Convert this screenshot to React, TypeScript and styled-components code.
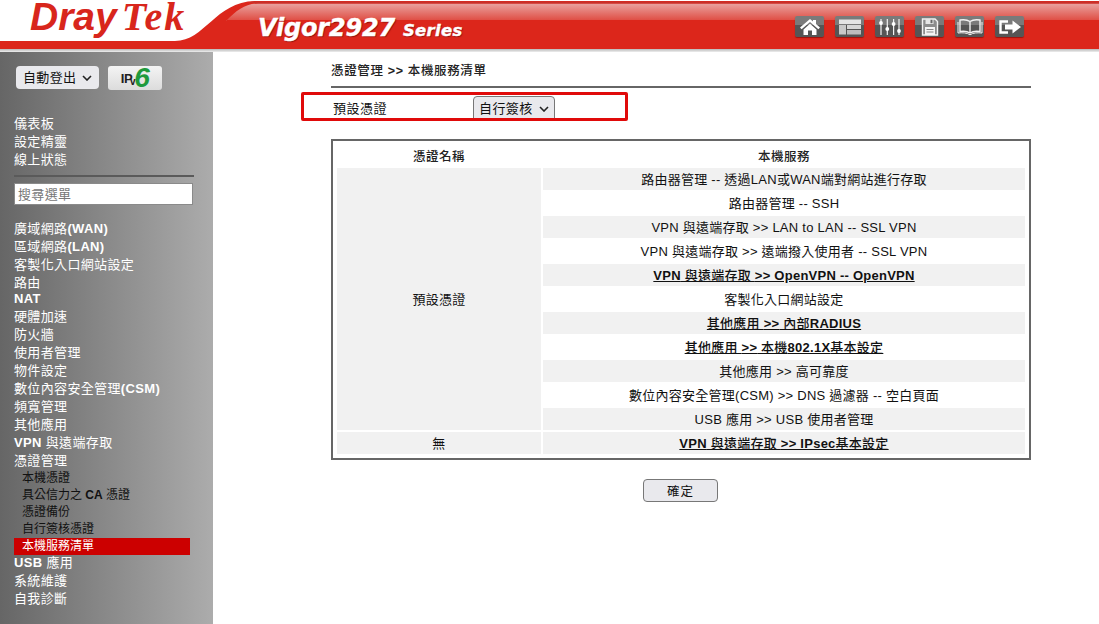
import React from "react";
import styled, { createGlobalStyle } from "styled-components";

const FONT = `"Liberation Sans", "Noto Sans CJK TC", sans-serif`;

const chevron =
  "url(\"data:image/svg+xml,%3Csvg xmlns='http://www.w3.org/2000/svg' width='10' height='6' viewBox='0 0 10 6'%3E%3Cpath d='M1 1l4 4 4-4' fill='none' stroke='%23222' stroke-width='1.600'/%3E%3C/svg%3E\")";

const Global = createGlobalStyle`
  html, body { margin: 0; padding: 0; background: #fff; height: 100%; overflow: hidden; }
  body { font-family: ${FONT}; font-size: 13px; color: #111; }
`;

const Page = styled.div`
  width: 1099px;
  height: 624px;
  display: flex;
  flex-direction: column;
`;

const Header = styled.header`
  position: relative;
  flex: 0 0 52px;
  display: flex;
  align-items: flex-start;
`;

const Swoosh = styled.svg`
  position: absolute;
  inset: 0;
  width: 1099px;
  height: 52px;
`;

const Logo = styled.div`
  position: relative;
  margin: 0 0 0 30px;
  width: 228px;
  height: 40px;
  display: flex;
  align-items: flex-start;
  white-space: nowrap;
  color: #d8261c;
`;

const LogoDray = styled.span`
  display: block;
  height: 40px;
  line-height: 33px;
  font-family: "Liberation Sans", sans-serif;
  font-weight: 700;
  font-style: italic;
  font-size: 39px;
`;

const LogoTek = styled.span`
  display: block;
  height: 40px;
  line-height: 33px;
  font-family: "Liberation Serif", serif;
  font-weight: 700;
  font-style: italic;
  font-size: 40px;
  margin-left: 5px;
  letter-spacing: 2px;
`;

const Model = styled.div`
  position: relative;
  margin-top: 13px;
  width: 537px;
  color: #fff;
  white-space: nowrap;
  font-family: "DejaVu Sans", sans-serif;
  font-weight: 700;
  font-style: italic;
  font-size: 24px;
  letter-spacing: -0.2px;
  line-height: 30px;
  -webkit-text-stroke: 0.4px #fff;
  text-shadow: 1px 1px 1px rgba(90, 0, 0, 0.6);
`;

const ModelSeries = styled.span`
  font-size: 16.5px;
  margin-left: 8px;
  letter-spacing: 0.3px;
`;

const Tools = styled.nav`
  position: relative;
  display: flex;
  gap: 11px;
  margin-top: 16px;
`;

const Tool = styled.div`
  width: 29px;
  height: 21px;
  border-radius: 2px;
  background: linear-gradient(#7a7a7a 0 45%, #555 45% 100%);
  box-shadow: 0 1px 1px rgba(90, 0, 0, 0.5);
  display: flex;
  align-items: center;
  justify-content: center;
`;

const Body = styled.div`
  flex: 1;
  display: flex;
  min-height: 0;
`;

const Sidebar = styled.aside`
  flex: 0 0 213px;
  box-sizing: border-box;
  padding: 14px 0 0 14px;
  background: linear-gradient(90deg, #666 0%, #acacac 100%);
  color: #fff;
  letter-spacing: 0.35px;
`;

const TopControls = styled.div`
  display: flex;
  align-items: flex-start;
  gap: 9px;
  margin-left: 2px;
  margin-bottom: 25px;
`;

const AutoSelect = styled.select`
  appearance: none;
  width: 83px;
  height: 23px;
  padding: 0 0 0 7px;
  border: 0;
  border-radius: 4px;
  background: #e9e9ed ${chevron} no-repeat right 7px center;
  color: #111;
  font-family: ${FONT};
  font-size: 13px;
  letter-spacing: 0.35px;
`;

const Ipv6 = styled.div`
  width: 54px;
  height: 24px;
  border-radius: 3px;
  background: linear-gradient(#f4f4f4, #dcdcdc);
  display: flex;
  align-items: center;
  justify-content: center;
  color: #222;
  font-weight: 700;
  font-size: 13px;
  letter-spacing: -0.5px;
`;

const Ipv6Small = styled.span`
  font-size: 10px;
  margin: 6px 0 0 -2px;
`;

const Ipv6Six = styled.span`
  color: #1f9a3c;
  font-style: italic;
  font-size: 28px;
  line-height: 24px;
  font-family: "Liberation Sans", sans-serif;
  margin-left: -1px;
`;

const MenuGroup = styled.div`
  display: flex;
  flex-direction: column;
`;

const MenuItem = styled.div<{ $short?: boolean }>`
  height: ${(p) => (p.$short ? 16 : 18)}px;
  line-height: 18px;
  white-space: nowrap;
`;

const Latin = styled.b`
  font-weight: 700;
`;

const SubMenu = styled.div`
  display: flex;
  flex-direction: column;
  margin-bottom: -1px;
  color: #111;
  font-size: 12px;
  letter-spacing: 0;
`;

const SubItem = styled.div<{ $active?: boolean }>`
  width: 176px;
  box-sizing: border-box;
  height: 17px;
  line-height: 17px;
  padding-left: 8px;
  white-space: nowrap;
  background: ${(p) => (p.$active ? "#cc0000" : "transparent")};
  color: ${(p) => (p.$active ? "#fff" : "#111")};
`;

const Divider = styled.div`
  width: 180px;
  height: 2px;
  margin: 6px 0 6px;
  background: #5a5a5a;
`;

const Search = styled.div`
  width: 179px;
  height: 22px;
  box-sizing: border-box;
  padding-left: 3px;
  line-height: 21px;
  background: #fff;
  border: 1px solid #8a8a8a;
  color: #777;
  margin-bottom: 15px;
`;

const Main = styled.main`
  flex: 0 0 700px;
  margin-left: 118px;
  display: flex;
  flex-direction: column;
`;

const Title = styled.div`
  height: 34px;
  line-height: 39px;
  border-bottom: 2px solid #666;
  font-size: 12.5px;
  font-weight: 500;
  color: #222;
  letter-spacing: 0.65px;
`;

const RedBox = styled.div`
  box-sizing: border-box;
  width: 327px;
  height: 29px;
  margin: 4px 0 18px -30px;
  border: 3px solid #e00a0a;
  border-radius: 2px;
  padding-left: 29px;
  display: flex;
  overflow: hidden;
`;

const RedLabel = styled.div`
  width: 140px;
  line-height: 27px;
  letter-spacing: 0.5px;
`;

const ModeSelect = styled.select`
  appearance: none;
  width: 82px;
  height: 26px;
  margin-top: 1px;
  padding: 0 0 2px 5px;
  background: #e9e9ed ${chevron} no-repeat right 5px center;
  border: 1px solid #777;
  border-radius: 4px;
  color: #111;
  font-family: ${FONT};
  font-size: 13px;
  letter-spacing: 0.4px;
`;

const Table = styled.table`
  width: 700px;
  box-sizing: border-box;
  border: 2px solid #666;
  padding: 2px;
  border-collapse: separate;
  border-spacing: 2px;
  table-layout: fixed;
  letter-spacing: 0.25px;
`;

const Th = styled.th<{ $w?: number }>`
  height: 21px;
  padding: 0;
  font-weight: 500;
  font-size: 12.5px;
  color: #222;
  letter-spacing: 0.5px;
  width: ${(p) => (p.$w ? `${p.$w}px` : "auto")};
`;

const NameCell = styled.td`
  background: #f1f1f1;
  text-align: center;
  padding: 0 0 2px;
  letter-spacing: 0.3px;
`;

const ServiceCell = styled.td<{ $alt: boolean; $bold?: boolean }>`
  height: 22px;
  box-sizing: border-box;
  padding: 0 0 2px;
  text-align: center;
  white-space: nowrap;
  background: ${(p) => (p.$alt ? "#f1f1f1" : "#fff")};
  font-weight: ${(p) => (p.$bold ? 500 : 400)};
  text-decoration: ${(p) => (p.$bold ? "underline" : "none")};
`;

const Actions = styled.div`
  display: flex;
  justify-content: center;
  margin-top: 19px;
`;

const OkButton = styled.button`
  width: 75px;
  height: 23px;
  padding: 0;
  margin-right: 1px;
  border: 1px solid #777;
  border-radius: 4px;
  background: #e9e9ed;
  color: #111;
  font-family: ${FONT};
  font-size: 12.5px;
  letter-spacing: 1px;
`;

/* Latin runs are bold while the CJK runs keep their lighter weight. */
function Mixed({ text }: { text: string }) {
  const parts = text.split(/([\x21-\x7e][\x20-\x7e]*[\x21-\x7e]|[\x21-\x7e])/);
  return (
    <>
      {parts.map((part, i) => (i % 2 === 1 ? <Latin key={i}>{part}</Latin> : part))}
    </>
  );
}

const top1 = ["儀表板", "設定精靈", "線上狀態"];
const menu: string[] = [
  "廣域網路(WAN)",
  "區域網路(LAN)",
  "客製化入口網站設定",
  "路由",
  "NAT",
  "硬體加速",
  "防火牆",
  "使用者管理",
  "物件設定",
  "數位內容安全管理(CSM)",
  "頻寬管理",
  "其他應用",
  "VPN 與遠端存取",
  "憑證管理",
];
const sub = ["本機憑證", "具公信力之 CA 憑證", "憑證備份", "自行簽核憑證", "本機服務清單"];
const menu2 = ["USB 應用", "系統維護", "自我診斷"];

const services: [string, boolean?][] = [
  ["路由器管理 -- 透過LAN或WAN端對網站進行存取"],
  ["路由器管理 -- SSH"],
  ["VPN 與遠端存取 >> LAN to LAN -- SSL VPN"],
  ["VPN 與遠端存取 >> 遠端撥入使用者 -- SSL VPN"],
  ["VPN 與遠端存取 >> OpenVPN -- OpenVPN", true],
  ["客製化入口網站設定"],
  ["其他應用 >> 內部RADIUS", true],
  ["其他應用 >> 本機802.1X基本設定", true],
  ["其他應用 >> 高可靠度"],
  ["數位內容安全管理(CSM) >> DNS 過濾器 -- 空白頁面"],
  ["USB 應用 >> USB 使用者管理"],
];

const ic = { fill: "none", stroke: "#f2f2f2", strokeWidth: 1.4 };

const icons = [
  <svg width="22" height="18" viewBox="0 0 22 18" key="home">
    <path d="M11 1 1 9.5l1.6 1.8L11 4l8.400 7.300L21 9.500 17 6V2h-3v1.400z" fill="#fff" />
    <path d="M4.500 11.500 11 5.800l6.500 5.700V17h-4.500v-4.500H9V17H4.500z" fill="#fff" />
  </svg>,
  <svg width="24" height="16" viewBox="0 0 24 16" key="layout">
    <rect x="1" y="0.500" width="22" height="4.500" fill="#e4e4e4" />
    <rect x="1" y="6" width="7" height="9.500" fill="#c9c9c9" />
    <rect x="9" y="6" width="14" height="4" fill="#d6d6d6" />
    <rect x="9" y="11" width="14" height="4.500" fill="#bdbdbd" />
  </svg>,
  <svg width="24" height="18" viewBox="0 0 24 18" key="mixer">
    <g stroke="#f2f2f2" strokeWidth="1.200">
      <path d="M3 1v16M9.300 1v16M15.600 1v16M21 1v16" />
    </g>
    <g fill="#fff">
      <circle cx="3" cy="5" r="1.900" />
      <circle cx="9.300" cy="11" r="1.900" />
      <circle cx="15.600" cy="6" r="1.900" />
      <circle cx="21" cy="13" r="1.900" />
    </g>
  </svg>,
  <svg width="18" height="18" viewBox="0 0 18 18" key="save">
    <path d="M1.500 1h12.500l2.500 2.500v13.500h-15z" {...ic} fill="#8c8c8c" />
    <rect x="4.500" y="1" width="8" height="5" fill="#e6e6e6" />
    <rect x="9.500" y="1.800" width="2" height="3.400" fill="#666" />
    <rect x="4" y="9" width="10" height="8" fill="#f4f4f4" />
    <path d="M5.500 11.500h7M5.500 14h7" stroke="#888" strokeWidth="1" />
  </svg>,
  <svg width="26" height="18" viewBox="0 0 26 18" key="book">
    <path d="M13 3.500C10.500 1.800 6 1.500 3 2v11.500c3-.5 7.500-.2 10 1.500 2.500-1.700 7-2 10-1.500V2c-3-.5-7.500-.2-10 1.500zM13 3.500V15" {...ic} />
    <path d="M1 4v11c4-.4 9-.4 12 1.800 3-2.200 8-2.200 12-1.800V4" {...ic} strokeWidth="1" />
  </svg>,
  <svg width="24" height="16" viewBox="0 0 24 16" key="logout">
    <path d="M10 2.500H2.500v11H10" fill="none" stroke="#fff" strokeWidth="2.400" />
    <path d="M7 5.500h7.500V1.500L23 8l-8.500 6.500v-4H7z" fill="#fff" />
  </svg>,
];

export default function App() {
  return (
    <Page>
      <Global />
      <Header>
        <Swoosh viewBox="0 0 1099 52" aria-hidden="true">
          <defs>
            <linearGradient id="gloss" x1="0" y1="0" x2="0" y2="1">
              <stop offset="0" stopColor="#e9a3a0" />
              <stop offset="1" stopColor="#df4a40" />
            </linearGradient>
            <linearGradient id="shade" x1="0" y1="0" x2="0" y2="1">
              <stop offset="0" stopColor="#b8b8b8" />
              <stop offset="1" stopColor="#eeeeee" />
            </linearGradient>
          </defs>
          <rect x="0" y="49" width="1099" height="3" fill="url(#shade)" />
          <path d="M0 41H175C205 41 215 2 255 1H1099V49H0Z" fill="#dc261b" />
          <path d="M226 21C237 10 245 4 258 3.500H1099V20H226Z" fill="url(#gloss)" />
          <path d="M248 2.500C250 2 252 1.500 256 1.500H1099V3.500H256Z" fill="#c8302a" />
        </Swoosh>
        <Logo>
          <LogoDray>Dray</LogoDray>
          <LogoTek>Tek</LogoTek>
        </Logo>
        <Model>
          Vigor2927<ModelSeries>Series</ModelSeries>
        </Model>
        <Tools>
          {icons.map((icon) => (
            <Tool key={icon.key}>{icon}</Tool>
          ))}
        </Tools>
      </Header>
      <Body>
        <Sidebar>
          <TopControls>
            <AutoSelect defaultValue="auto">
              <option value="auto">自動登出</option>
            </AutoSelect>
            <Ipv6>
              IP<Ipv6Small>v</Ipv6Small>
              <Ipv6Six>6</Ipv6Six>
            </Ipv6>
          </TopControls>
          <MenuGroup>
            {top1.map((t) => (
              <MenuItem key={t}>{t}</MenuItem>
            ))}
          </MenuGroup>
          <Divider />
          <Search>搜尋選單</Search>
          <MenuGroup>
            {menu.map((t) => (
              <MenuItem key={t} $short={t === "路由"}>
                <Mixed text={t} />
              </MenuItem>
            ))}
            <SubMenu>
              {sub.map((t, i) => (
                <SubItem key={t} $active={i === sub.length - 1}>
                  <Mixed text={t} />
                </SubItem>
              ))}
            </SubMenu>
            {menu2.map((t) => (
              <MenuItem key={t}>
                <Mixed text={t} />
              </MenuItem>
            ))}
          </MenuGroup>
        </Sidebar>
        <Main>
          <Title>
            <Mixed text="憑證管理 >> 本機服務清單" />
          </Title>
          <RedBox>
            <RedLabel>預設憑證</RedLabel>
            <ModeSelect defaultValue="self">
              <option value="self">自行簽核</option>
            </ModeSelect>
          </RedBox>
          <Table>
            <thead>
              <tr>
                <Th $w={204}>憑證名稱</Th>
                <Th>本機服務</Th>
              </tr>
            </thead>
            <tbody>
              {services.map(([t, b], i) => (
                <tr key={t}>
                  {i === 0 && <NameCell rowSpan={services.length}>預設憑證</NameCell>}
                  <ServiceCell $alt={i % 2 === 0} $bold={b}>
                    {b ? <Mixed text={t} /> : t}
                  </ServiceCell>
                </tr>
              ))}
              <tr>
                <NameCell>無</NameCell>
                <ServiceCell $alt $bold>
                  <Mixed text="VPN 與遠端存取 >> IPsec基本設定" />
                </ServiceCell>
              </tr>
            </tbody>
          </Table>
          <Actions>
            <OkButton>確定</OkButton>
          </Actions>
        </Main>
      </Body>
    </Page>
  );
}
